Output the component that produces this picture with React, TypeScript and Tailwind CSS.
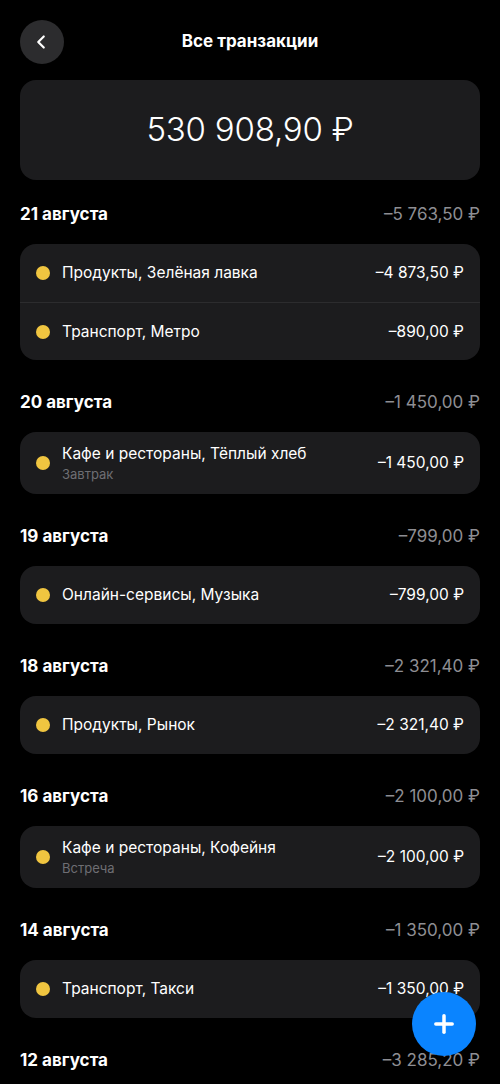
import { ChevronLeft, Plus } from 'lucide-react'

type Tx = { title: string; note?: string; amount: string }
type Day = { date: string; total: string; items: Tx[] }

const days: Day[] = [
  {
    date: '21 августа',
    total: '–5 763,50 ₽',
    items: [
      { title: 'Продукты, Зелёная лавка', amount: '–4 873,50 ₽' },
      { title: 'Транспорт, Метро', amount: '–890,00 ₽' },
    ],
  },
  {
    date: '20 августа',
    total: '–1 450,00 ₽',
    items: [{ title: 'Кафе и рестораны, Тёплый хлеб', note: 'Завтрак', amount: '–1 450,00 ₽' }],
  },
  {
    date: '19 августа',
    total: '–799,00 ₽',
    items: [{ title: 'Онлайн-сервисы, Музыка', amount: '–799,00 ₽' }],
  },
  {
    date: '18 августа',
    total: '–2 321,40 ₽',
    items: [{ title: 'Продукты, Рынок', amount: '–2 321,40 ₽' }],
  },
  {
    date: '16 августа',
    total: '–2 100,00 ₽',
    items: [{ title: 'Кафе и рестораны, Кофейня', note: 'Встреча', amount: '–2 100,00 ₽' }],
  },
  {
    date: '14 августа',
    total: '–1 350,00 ₽',
    items: [{ title: 'Транспорт, Такси', amount: '–1 350,00 ₽' }],
  },
  {
    date: '12 августа',
    total: '–3 285,20 ₽',
    items: [{ title: 'Продукты, Перекрёсток', amount: '–3 285,20 ₽' }],
  },
]

export default function App() {
  return (
    <div
      className="relative h-screen overflow-hidden bg-black text-white"
      style={{ fontFamily: 'Inter, "Noto Sans", sans-serif' }}
    >
      <div className="px-5 pt-5">
        {/* шапка */}
        <div className="flex items-center h-11">
          <button className="w-11 h-11 rounded-full bg-[#2c2c2e] flex items-center justify-center shrink-0">
            <ChevronLeft size={22} strokeWidth={2.4} className="text-white -ml-0.5" />
          </button>
          <h1 className="flex-1 text-center text-[17px] font-bold -ml-11">Все транзакции</h1>
        </div>

        {/* баланс */}
        <div className="mt-4 h-[100px] rounded-2xl bg-[#1c1c1e] flex items-center justify-center">
          <span className="text-[33px] font-light tracking-[-0.2px]">530 908,90 ₽</span>
        </div>

        {/* список по дням */}
        <div className="mt-6 flex flex-col gap-8">
          {days.map((d) => (
            <div key={d.date}>
              <div className="flex items-center justify-between h-[22px]">
                <span className="text-[17px] font-bold">{d.date}</span>
                <span className="text-[17px] text-[#8e8e93]">{d.total}</span>
              </div>
              <div className="mt-[18px] rounded-2xl bg-[#1c1c1e] overflow-hidden">
                {d.items.map((t, i) => (
                  <div
                    key={i}
                    className={`flex items-center pl-4 pr-4 ${t.note ? 'h-[62px]' : 'h-[58px]'} ${
                      i > 0 ? 'border-t border-[#2c2c2e]' : ''
                    }`}
                  >
                    <span className="w-[14px] h-[14px] rounded-full bg-[#f0c540] shrink-0" />
                    <div className="flex-1 ml-3 min-w-0">
                      <div className="text-[15.5px] leading-5">{t.title}</div>
                      {t.note && <div className="text-[13px] leading-4 mt-[2px] text-[#6e6e73]">{t.note}</div>}
                    </div>
                    <span className="text-[15.5px]">{t.amount}</span>
                  </div>
                ))}
              </div>
            </div>
          ))}
        </div>
      </div>

      {/* кнопка добавления */}
      <button className="absolute right-6 top-[992px] w-16 h-16 rounded-full bg-[#0a84ff] flex items-center justify-center">
        <Plus size={28} strokeWidth={3} className="text-white" />
      </button>
    </div>
  )
}
